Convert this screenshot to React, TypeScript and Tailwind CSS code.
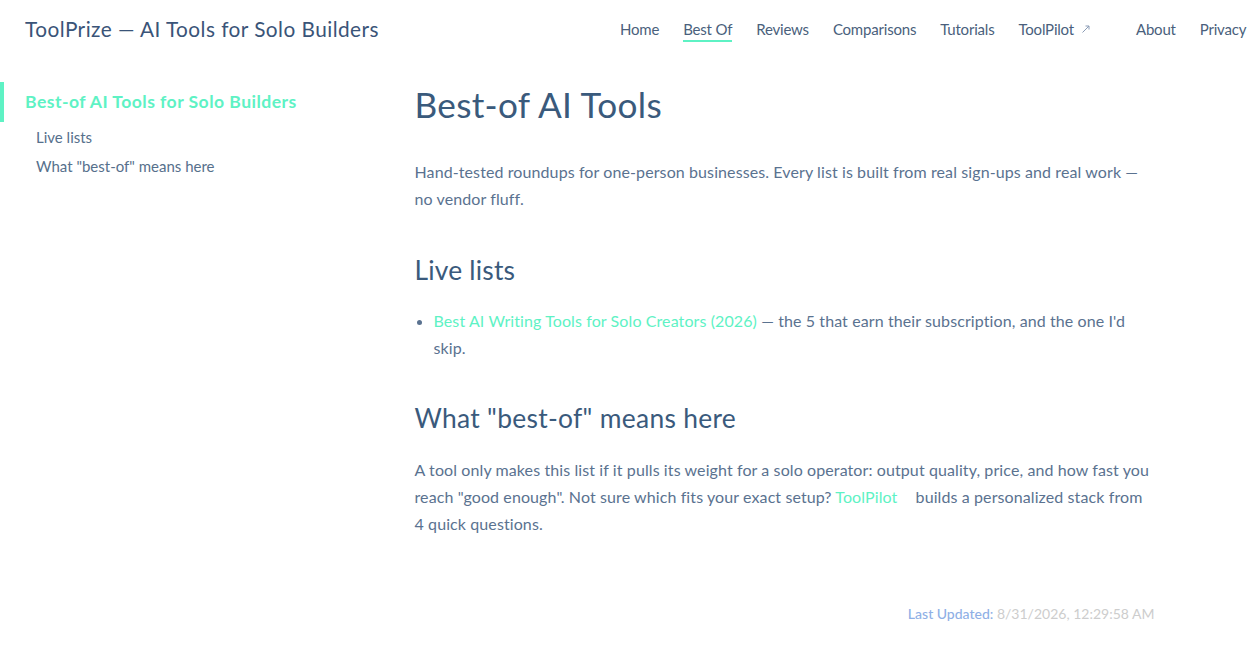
import React from 'react';

const navItems = [
  { label: 'Home' },
  { label: 'Best Of', active: true },
  { label: 'Reviews' },
  { label: 'Comparisons' },
  { label: 'Tutorials' },
  { label: 'ToolPilot', external: true },
  { label: 'About' },
  { label: 'Privacy' },
];

function OutboundIcon() {
  return (
    <svg width="12" height="12" viewBox="0 0 12 12" className="ml-[6px] inline-block">
      <path d="M2.5 9.5 L9 3 M5.5 3 H9 V6.5" fill="none" stroke="#8a9bb5" strokeWidth="1" />
    </svg>
  );
}

function Navbar() {
  return (
    <header className="flex h-[58px] items-center whitespace-nowrap pl-[25px]">
      <span className="w-[595px] shrink-0 text-[20.8px] tracking-[0.45px] text-[#3a5478]">
        ToolPrize — AI Tools for Solo Builders
      </span>
      <nav className="flex items-center">
        {navItems.map((item) => (
          <a
            key={item.label}
            className={
              'relative flex shrink-0 items-center text-[15px] tracking-[-0.2px] text-[#4a5f7c] ' +
              (item.label === 'About' ? 'ml-[44px]' : item.label === 'Home' ? '' : 'ml-[24px]')
            }
          >
            {item.label}
            {item.external && <OutboundIcon />}
            {item.active && (
              <span className="absolute left-0 right-0 top-[22px] h-[2px] bg-[#5ef2c4]" />
            )}
          </a>
        ))}
      </nav>
    </header>
  );
}

function Sidebar() {
  return (
    <aside className="w-[320px] shrink-0 pt-[24px]">
      <div className="flex h-[40px] items-center border-l-4 border-[#5ef2c4] pl-[21px] text-[17.6px] font-bold tracking-[0.45px] text-[#5ef2c4]">
        Best-of AI Tools for Solo Builders
      </div>
      <ul className="mt-[1px] pl-[36px] text-[15px] text-[#56708c]">
        <li className="h-[29px] leading-[29px]">Live lists</li>
        <li className="h-[29px] leading-[29px]">What "best-of" means here</li>
      </ul>
    </aside>
  );
}

function Content() {
  return (
    <main className="flex-1">
      <div className="mx-auto max-w-[820px] px-[40px] text-[16px] leading-[27px] tracking-[0.1px] text-[#5a7290]">
        <h1 className="mt-[24px] text-[35.2px] leading-[44px] tracking-[0.3px] text-[#3a5a7c]">Best-of AI Tools</h1>
        <p className="mt-[32px]">
          Hand-tested roundups for one-person businesses. Every list is built from real sign-ups and real work —
          no vendor fluff.
        </p>
        <h2 className="mt-[41px] text-[26.4px] leading-[34px] tracking-[0.2px] text-[#3a5a7c]">Live lists</h2>
        <ul className="mt-[20px] list-disc pl-[19px] marker:text-[#5a7290]">
          <li>
            <a className="text-[#5ef2c4]">Best AI Writing Tools for Solo Creators (2026)</a> — the 5 that earn their
            subscription, and the one I'd skip.
          </li>
        </ul>
        <h2 className="mt-[40px] text-[26.4px] leading-[34px] tracking-[0.3px] text-[#3a5a7c]">
          What "best-of" means here
        </h2>
        <p className="mt-[21px]">
          A tool only makes this list if it pulls its weight for a solo operator: output quality, price, and how fast
          you reach "good enough". Not sure which fits your exact setup?{' '}
          <a className="text-[#5ef2c4]">
            ToolPilot<span className="inline-block w-[14px]" />
          </a>{' '}
          builds a personalized stack from 4 quick questions.
        </p>
        <div className="mt-[63px] text-right text-[14px] tracking-normal">
          <span className="font-medium text-[#8fb0e6]">Last Updated:</span>{' '}
          <span className="text-[#cdcdcd]">8/31/2026, 12:29:58 AM</span>
        </div>
      </div>
    </main>
  );
}

export default function App() {
  return (
    <div className="min-h-[652px] overflow-hidden bg-white font-['Lato','Liberation_Sans',sans-serif]">
      <Navbar />
      <div className="flex">
        <Sidebar />
        <Content />
      </div>
    </div>
  );
}
